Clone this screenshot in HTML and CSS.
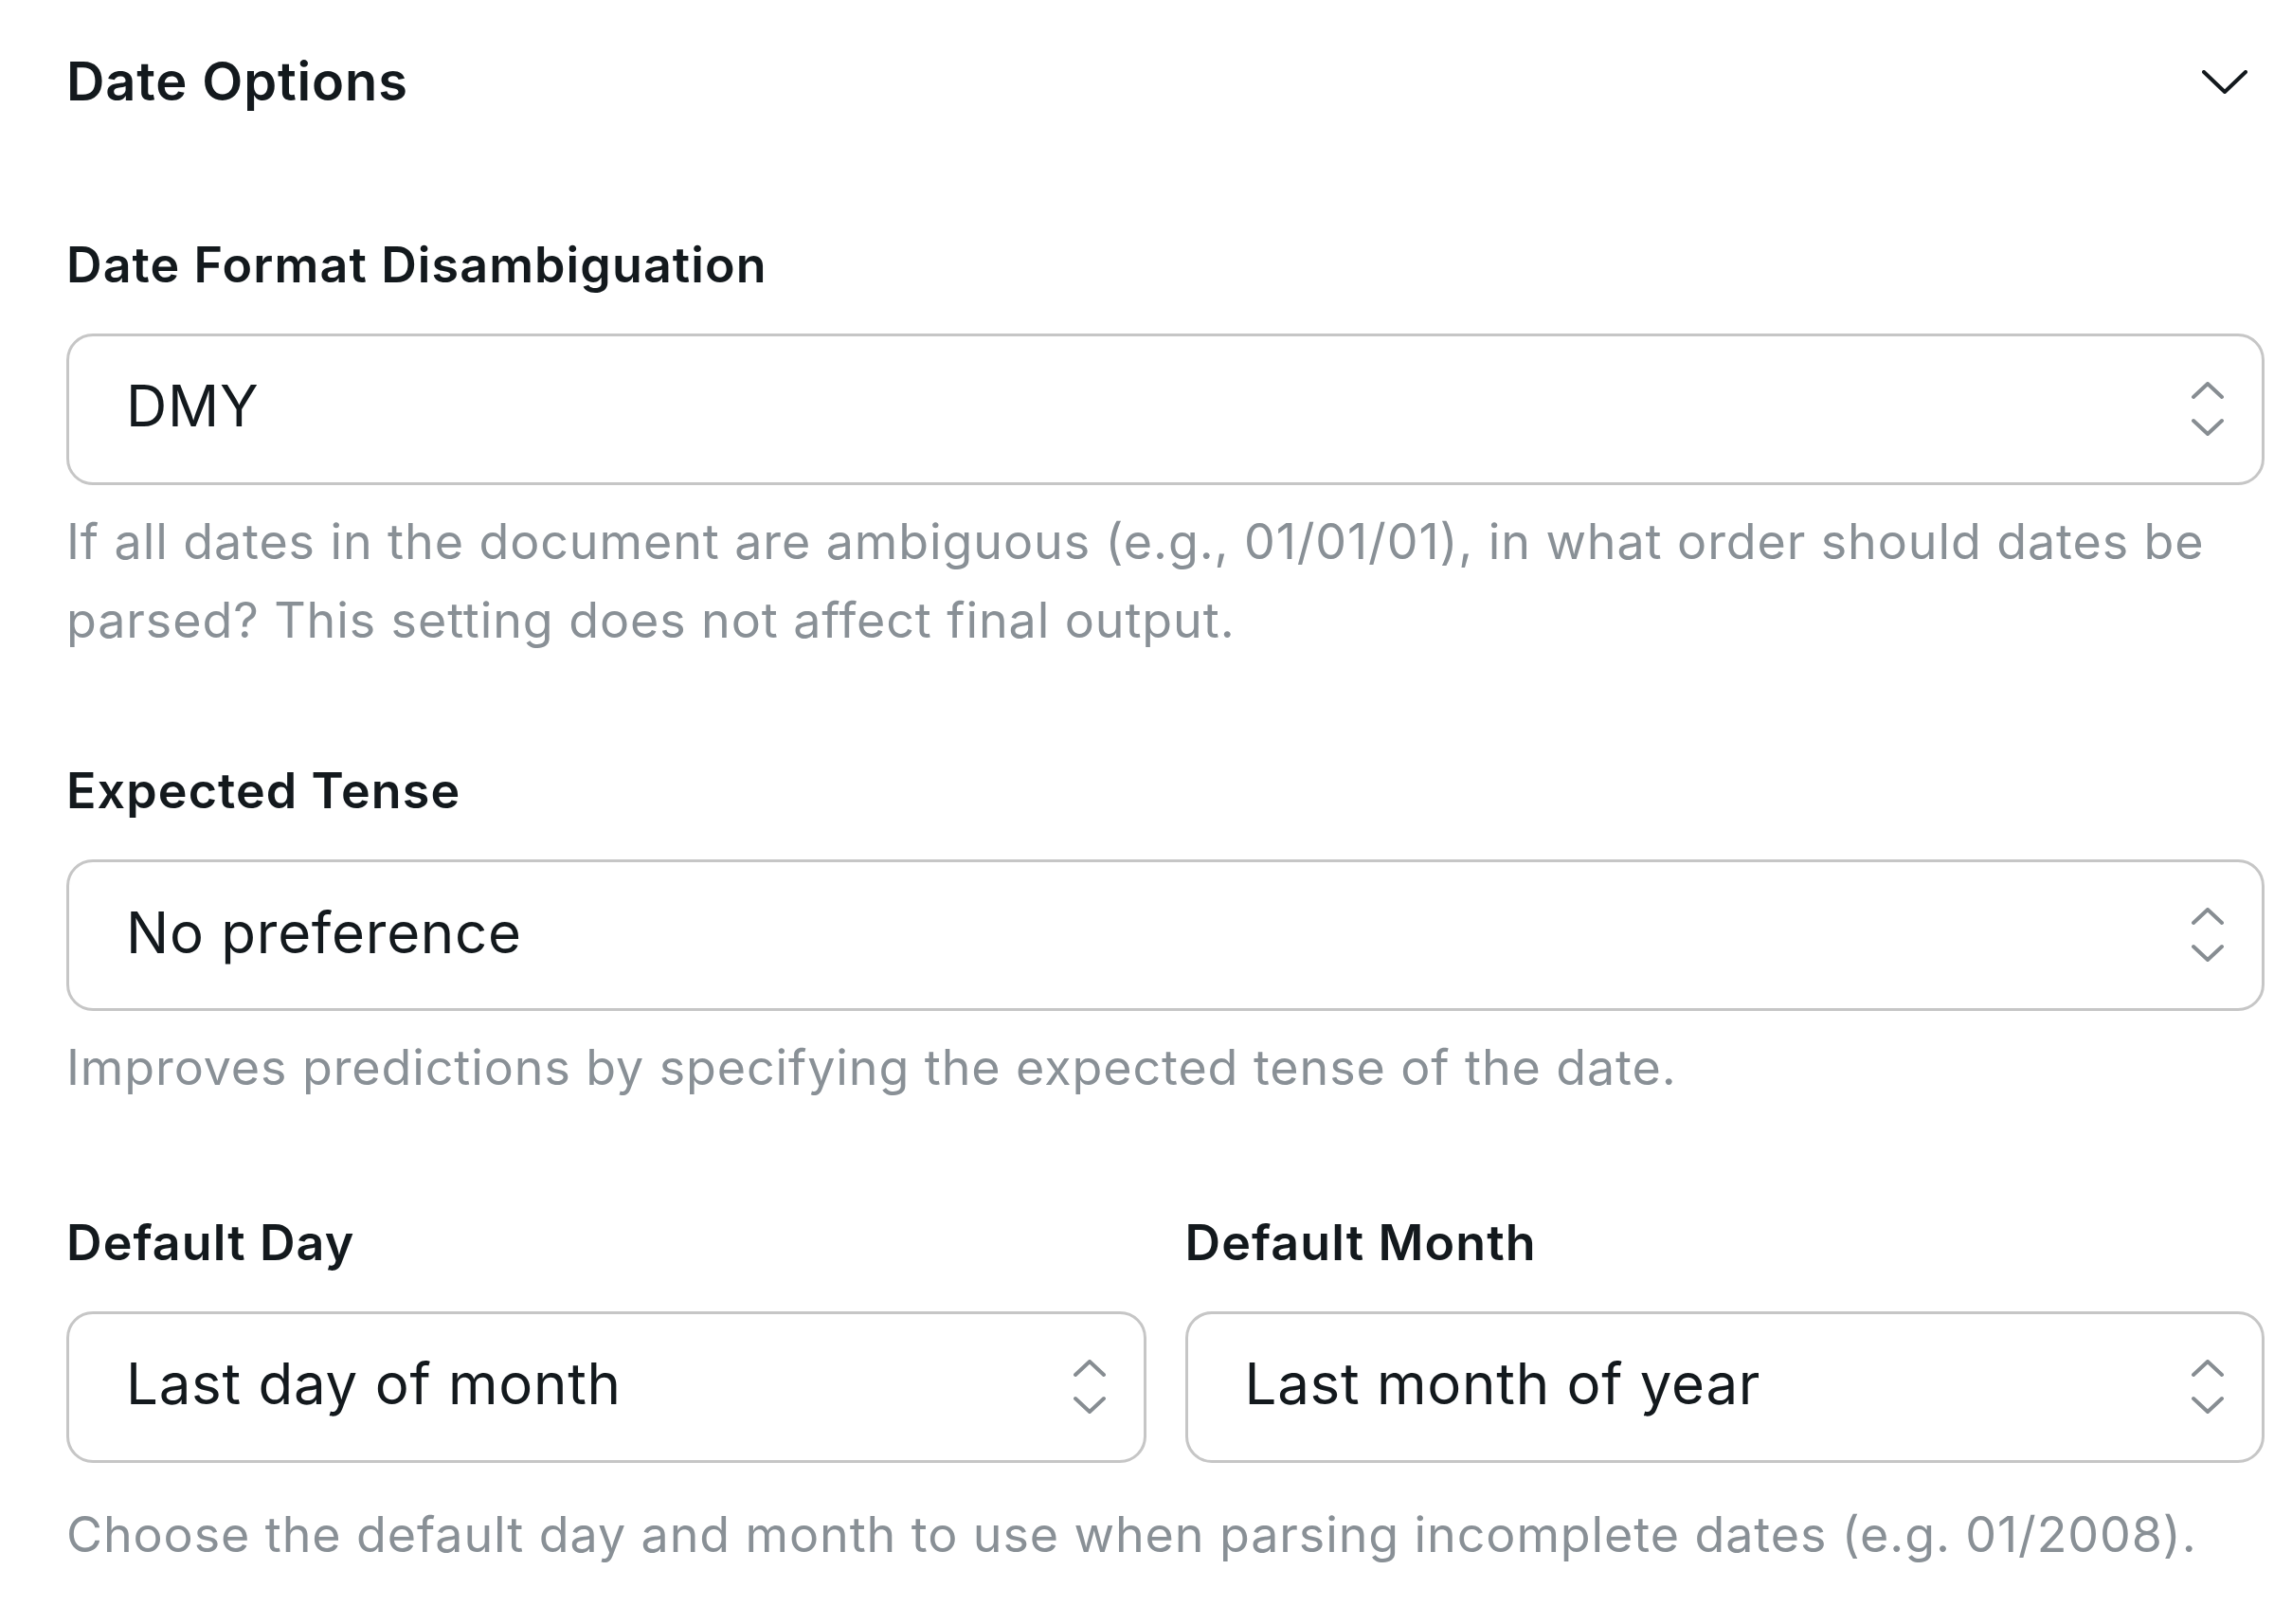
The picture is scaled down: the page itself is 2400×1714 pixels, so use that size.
FILE: index.html
```html
<!DOCTYPE html>
<html lang="en">
<head>
<meta charset="utf-8">
<title>Date Options</title>
<link rel="stylesheet" href="styles.css">
</head>
<body>
<div class="panel">
  <div class="header">
    <h2 class="title">Date Options</h2>
    <svg class="chev" width="48" height="25" viewBox="0 0 48 25"><polyline points="2,2 24,23 46,2" fill="none" stroke="#13191d" stroke-width="4" stroke-linecap="round" stroke-linejoin="round"/></svg>
  </div>

  <div class="field first">
    <div class="label">Date Format Disambiguation</div>
    <div class="select">
      <span class="value">DMY</span>
      <svg class="updown" width="34" height="58" viewBox="0 0 34 58"><polyline points="2,16 17,2 32,16" fill="none" stroke="#878d92" stroke-width="4" stroke-linecap="round" stroke-linejoin="round"/><polyline points="2,41 17,55 32,41" fill="none" stroke="#878d92" stroke-width="4" stroke-linecap="round" stroke-linejoin="round"/></svg>
    </div>
    <p class="help">If all dates in the document are ambiguous (e.g., 01/01/01), in what order should dates be parsed? This setting does not affect final output.</p>
  </div>

  <div class="field">
    <div class="label">Expected Tense</div>
    <div class="select">
      <span class="value">No preference</span>
      <svg class="updown" width="34" height="58" viewBox="0 0 34 58"><polyline points="2,16 17,2 32,16" fill="none" stroke="#878d92" stroke-width="4" stroke-linecap="round" stroke-linejoin="round"/><polyline points="2,41 17,55 32,41" fill="none" stroke="#878d92" stroke-width="4" stroke-linecap="round" stroke-linejoin="round"/></svg>
    </div>
    <p class="help">Improves predictions by specifying the expected tense of the date.</p>
  </div>

  <div class="pair">
    <div class="col">
      <div class="label">Default Day</div>
      <div class="select">
        <span class="value">Last day of month</span>
        <svg class="updown" width="34" height="58" viewBox="0 0 34 58"><polyline points="2,16 17,2 32,16" fill="none" stroke="#878d92" stroke-width="4" stroke-linecap="round" stroke-linejoin="round"/><polyline points="2,41 17,55 32,41" fill="none" stroke="#878d92" stroke-width="4" stroke-linecap="round" stroke-linejoin="round"/></svg>
      </div>
    </div>
    <div class="col">
      <div class="label">Default Month</div>
      <div class="select">
        <span class="value">Last month of year</span>
        <svg class="updown" width="34" height="58" viewBox="0 0 34 58"><polyline points="2,16 17,2 32,16" fill="none" stroke="#878d92" stroke-width="4" stroke-linecap="round" stroke-linejoin="round"/><polyline points="2,41 17,55 32,41" fill="none" stroke="#878d92" stroke-width="4" stroke-linecap="round" stroke-linejoin="round"/></svg>
      </div>
    </div>
  </div>
  <p class="help help-wide">Choose the default day and month to use when parsing incomplete dates (e.g. 01/2008).</p>
</div>
</body>
</html>
```

FILE: styles.css
```css
html, body {
  margin: 0;
  padding: 0;
  background: #ffffff;
}

body {
  font-family: "Inter", "Liberation Sans", sans-serif;
  color: #13191d;
}

.panel {
  width: 2400px;
  box-sizing: border-box;
  padding: 44px 10px 0 70px;
}

.header {
  display: flex;
  justify-content: space-between;
  align-items: center;
  height: 84px;
  padding-right: 18px;
}

.title {
  margin: 0;
  font-size: 56px;
  line-height: 84px;
  font-weight: 600;
  color: #13191d;
  letter-spacing: 0.85px;
}

.chev {
  display: block;
}

.field.first {
  margin-top: 109.5px;
}

.field + .field {
  margin-top: 97px;
}

.label {
  font-size: 52px;
  line-height: 83.2px;
  font-weight: 600;
  color: #13191d;
  margin-bottom: 31px;
  letter-spacing: 1.1px;
}

.select {
  height: 160px;
  box-sizing: border-box;
  border: 3px solid #c6c6c6;
  border-radius: 28px;
  display: flex;
  align-items: center;
  justify-content: space-between;
  padding: 0 40px 7px 60px;
  background: #ffffff;
}

.value {
  font-size: 60px;
  line-height: 72px;
  font-weight: 400;
  color: #13191d;
  letter-spacing: 0.75px;
}

.updown {
  display: block;
  margin-top: 7px;
}

.help {
  margin: 18px 0 0 0;
  font-size: 52px;
  line-height: 83.2px;
  font-weight: 400;
  color: #899096;
  letter-spacing: 0.9px;
}

.pair {
  margin-top: 101px;
  display: grid;
  grid-template-columns: 1fr 1fr;
  column-gap: 41px;
}

.help-wide {
  margin-top: 34px;
}
```
